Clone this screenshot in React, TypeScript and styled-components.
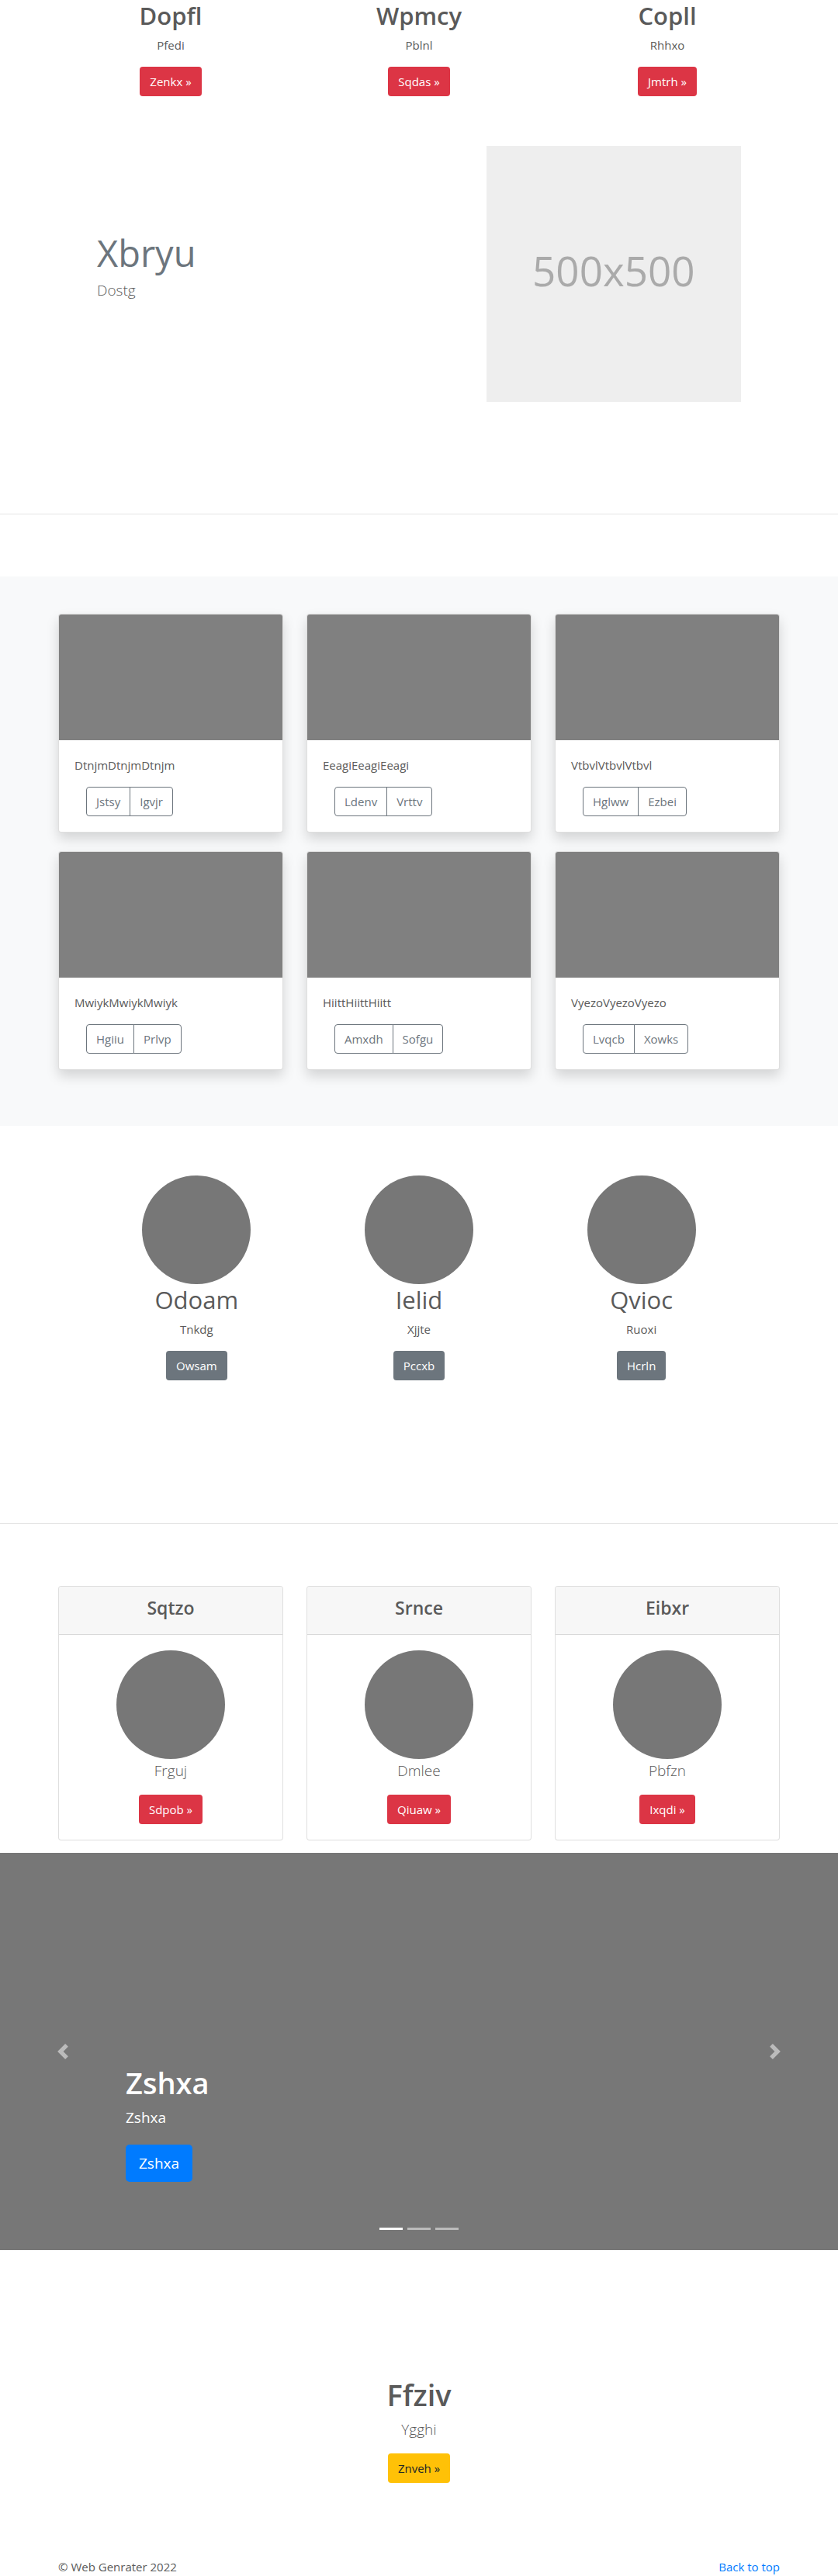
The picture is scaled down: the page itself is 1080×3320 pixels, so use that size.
import React from "react";
import styled, { createGlobalStyle, css } from "styled-components";

const GlobalStyle = createGlobalStyle`
  *, *::before, *::after { box-sizing: border-box; }
  body {
    margin: 0;
    background: #fff;
    color: #5a5a5a;
    font-family: "Segoe UI", "Open Sans", "Noto Sans", sans-serif;
    font-size: 15px;
    line-height: 24px;
  }
  h2, h4, p { margin: 0; }
  a { color: #007bff; text-decoration: none; }
`;

const Container = styled.div<{ $narrow?: boolean }>`
  width: 100%;
  max-width: ${(p) => (p.$narrow ? "860px" : "960px")};
  margin: 0 auto;
  padding: 0 15px;
`;

const Columns = styled.div<{ $rowGap?: number }>`
  display: grid;
  grid-template-columns: repeat(3, minmax(0, 1fr));
  column-gap: 30px;
  row-gap: ${(p) => p.$rowGap ?? 0}px;
  @media (max-width: 767px) {
    grid-template-columns: 1fr;
    row-gap: 24px;
  }
`;

const Centered = styled.div`
  display: flex;
  flex-direction: column;
  align-items: center;
  text-align: center;
`;

const Section = styled.section<{ $top?: number; $bottom?: number; $tint?: boolean }>`
  padding-top: ${(p) => p.$top ?? 0}px;
  padding-bottom: ${(p) => p.$bottom ?? 0}px;
  background: ${(p) => (p.$tint ? "#f8f9fa" : "transparent")};
`;

const Heading = styled.h2<{ $strong?: boolean }>`
  margin-bottom: 6px;
  font-size: 31px;
  line-height: 40px;
  font-weight: ${(p) => (p.$strong ? 600 : 400)};
`;

const Title = styled.h2`
  margin-bottom: 4px;
  font-size: 38px;
  line-height: 52px;
  font-weight: 600;
`;

const Text = styled.p`
  margin-bottom: 16px;
`;

const Lead = styled.p`
  margin-bottom: 16px;
  font-size: 19px;
  line-height: 30px;
  font-weight: 300;
`;

const tones = {
  danger: css`background: #dc3545; color: #fff;`,
  secondary: css`background: #6c757d; color: #fff;`,
  warning: css`background: #ffc107; color: #212529;`,
  primary: css`background: #007bff; color: #fff;`,
};

const ButtonLink = styled.a<{ $tone: keyof typeof tones; $large?: boolean }>`
  display: inline-block;
  padding: ${(p) => (p.$large ? "9px 17px" : "7px 13px")};
  border-radius: ${(p) => (p.$large ? "5px" : "4px")};
  font-size: ${(p) => (p.$large ? "19px" : "15px")};
  line-height: ${(p) => (p.$large ? "30px" : "24px")};
  ${(p) => tones[p.$tone]}
`;

const Divider = styled.hr`
  height: 1px;
  margin: 80px 0;
  border: 0;
  background: #e5e5e5;
`;

const Featurette = styled(Container)`
  display: grid;
  grid-template-columns: 7fr 5fr;
  align-items: center;
  padding: 0;
  @media (max-width: 767px) {
    grid-template-columns: 1fr;
  }
`;

const FeatureCell = styled.div`
  min-width: 0;
  padding: 0 15px;
`;

const FeatureHeading = styled.h2`
  margin-bottom: 8px;
  color: #6c757d;
  font-size: 47px;
  line-height: 50px;
  font-weight: 400;
`;

const Placeholder = styled.div`
  display: flex;
  align-items: center;
  justify-content: center;
  min-height: 330px;
  padding-bottom: 8px;
  background: #eee;
  color: #aaa;
  font-size: 53px;
  line-height: 64px;
`;

const Card = styled.article<{ $raised?: boolean }>`
  min-width: 0;
  overflow: hidden;
  border: 1px solid rgba(0, 0, 0, 0.125);
  border-radius: 4px;
  background: #fff;
  background-clip: border-box;
  box-shadow: ${(p) => (p.$raised ? "0 8px 16px rgba(0, 0, 0, 0.15)" : "none")};
`;

const CardImage = styled.div`
  height: 162px;
  background: #808080;
`;

const CardBody = styled.div`
  padding: 20px;
`;

const CenteredCardBody = styled(Centered)`
  padding: 20px;
`;

const CardHeader = styled.header`
  padding: 12px 20px 18px;
  border-bottom: 1px solid rgba(0, 0, 0, 0.125);
  background: #f7f7f7;
  text-align: center;
`;

const CardTitle = styled.h4`
  font-size: 23px;
  line-height: 31px;
  font-weight: 600;
`;

const ButtonGroup = styled.div`
  display: flex;
  padding: 0 15px;
`;

const OutlineButton = styled.button`
  padding: 6px 12px;
  border: 1px solid #6c757d;
  background: transparent;
  color: #6c757d;
  font: inherit;
  cursor: pointer;
  &:first-child {
    border-radius: 4px 0 0 4px;
  }
  &:last-child {
    margin-left: -1px;
    border-radius: 0 4px 4px 0;
  }
`;

const Circle = styled.div`
  width: 140px;
  height: 140px;
  border-radius: 50%;
  background: #777;
`;

const Carousel = styled.section`
  position: relative;
  height: 512px;
  margin-top: 16px;
  background: #777;
  color: #fff;
`;

const Caption = styled.div`
  position: absolute;
  right: 15%;
  bottom: 48px;
  left: 15%;
  padding: 20px 0 40px;
`;

const CaptionText = styled.p`
  margin-bottom: 20px;
  font-size: 19px;
  line-height: 30px;
`;

const Arrow = styled.button<{ $side: "left" | "right" }>`
  position: absolute;
  top: 0;
  bottom: 0;
  ${(p) => p.$side}: 0;
  display: flex;
  align-items: center;
  justify-content: center;
  width: 15%;
  padding: 0;
  border: 0;
  background: none;
  color: #fff;
  opacity: 0.5;
  cursor: pointer;
`;

const Indicators = styled.div`
  position: absolute;
  right: 15%;
  bottom: 16px;
  left: 15%;
  display: flex;
  justify-content: center;
  gap: 6px;
`;

const Indicator = styled.button<{ $active?: boolean }>`
  width: 30px;
  height: 23px;
  padding: 0;
  border: 0 solid transparent;
  border-width: 10px 0;
  background: #fff;
  background-clip: padding-box;
  opacity: ${(p) => (p.$active ? 1 : 0.5)};
  cursor: pointer;
`;

const Footer = styled.footer`
  padding-top: 96px;
`;

const FooterRow = styled(Container)`
  display: flex;
  justify-content: space-between;
`;

const intro = [
  ["Dopfl", "Pfedi", "Zenkx"],
  ["Wpmcy", "Pblnl", "Sqdas"],
  ["Copll", "Rhhxo", "Jmtrh"],
];

const album = [
  ["DtnjmDtnjmDtnjm", "Jstsy", "Igvjr"],
  ["EeagiEeagiEeagi", "Ldenv", "Vrttv"],
  ["VtbvlVtbvlVtbvl", "Hglww", "Ezbei"],
  ["MwiykMwiykMwiyk", "Hgiiu", "Prlvp"],
  ["HiittHiittHiitt", "Amxdh", "Sofgu"],
  ["VyezoVyezoVyezo", "Lvqcb", "Xowks"],
];

const people = [
  ["Odoam", "Tnkdg", "Owsam"],
  ["Ielid", "Xjjte", "Pccxb"],
  ["Qvioc", "Ruoxi", "Hcrln"],
];

const offers = [
  ["Sqtzo", "Frguj", "Sdpob"],
  ["Srnce", "Dmlee", "Qiuaw"],
  ["Eibxr", "Pbfzn", "Ixqdi"],
];

export default function App() {
  const [slide, setSlide] = React.useState(0);
  const step = (by: number) => setSlide((slide + by + 3) % 3);

  return (
    <>
      <GlobalStyle />
      <main>
        <Section $bottom={64}>
          <Container>
            <Columns>
              {intro.map(([title, text, action]) => (
                <Centered key={title}>
                  <Heading $strong>{title}</Heading>
                  <Text>{text}</Text>
                  <ButtonLink href="#" $tone="danger">{action} »</ButtonLink>
                </Centered>
              ))}
            </Columns>
          </Container>
        </Section>

        <Section $bottom={64}>
          <Featurette $narrow>
            <FeatureCell>
              <FeatureHeading>Xbryu</FeatureHeading>
              <Lead>Dostg</Lead>
            </FeatureCell>
            <FeatureCell>
              <Placeholder>500x500</Placeholder>
            </FeatureCell>
          </Featurette>
        </Section>

        <Divider />

        <Section $tint $top={48} $bottom={72}>
          <Container>
            <Columns $rowGap={24}>
              {album.map(([text, first, second]) => (
                <Card key={text} $raised>
                  <CardImage />
                  <CardBody>
                    <Text>{text}</Text>
                    <ButtonGroup>
                      <OutlineButton type="button">{first}</OutlineButton>
                      <OutlineButton type="button">{second}</OutlineButton>
                    </ButtonGroup>
                  </CardBody>
                </Card>
              ))}
            </Columns>
          </Container>
        </Section>

        <Section $top={64} $bottom={104}>
          <Container $narrow>
            <Columns>
              {people.map(([name, text, action]) => (
                <Centered key={name}>
                  <Circle />
                  <Heading>{name}</Heading>
                  <Text>{text}</Text>
                  <ButtonLink href="#" $tone="secondary">{action}</ButtonLink>
                </Centered>
              ))}
            </Columns>
          </Container>
        </Section>

        <Divider />

        <Container>
          <Columns>
            {offers.map(([title, text, action]) => (
              <Card key={title}>
                <CardHeader>
                  <CardTitle>{title}</CardTitle>
                </CardHeader>
                <CenteredCardBody>
                  <Circle />
                  <Lead>{text}</Lead>
                  <ButtonLink href="#" $tone="danger">{action} »</ButtonLink>
                </CenteredCardBody>
              </Card>
            ))}
          </Columns>
        </Container>

        <Carousel>
          <Caption>
            <Title>Zshxa</Title>
            <CaptionText>Zshxa</CaptionText>
            <ButtonLink href="#" $tone="primary" $large>Zshxa</ButtonLink>
          </Caption>
          <Arrow type="button" $side="left" aria-label="Previous" onClick={() => step(-1)}>
            <svg width="20" height="20" viewBox="0 0 8 8" fill="currentColor">
              <path d="M5.25 0l-4 4 4 4 1.5-1.5-2.5-2.5 2.5-2.5-1.5-1.5z" />
            </svg>
          </Arrow>
          <Arrow type="button" $side="right" aria-label="Next" onClick={() => step(1)}>
            <svg width="20" height="20" viewBox="0 0 8 8" fill="currentColor">
              <path d="M2.75 0l-1.5 1.5 2.5 2.5-2.5 2.5 1.5 1.5 4-4-4-4z" />
            </svg>
          </Arrow>
          <Indicators>
            {[0, 1, 2].map((i) => (
              <Indicator
                key={i}
                type="button"
                $active={i === slide}
                aria-label={`Slide ${i + 1}`}
                onClick={() => setSlide(i)}
              />
            ))}
          </Indicators>
        </Carousel>

        <Section $top={160}>
          <Centered>
            <Title>Ffziv</Title>
            <Lead>Ygghi</Lead>
            <ButtonLink href="#" $tone="warning">Znveh »</ButtonLink>
          </Centered>
        </Section>
      </main>

      <Footer>
        <FooterRow>
          <p>© Web Genrater 2022</p>
          <a href="#">Back to top</a>
        </FooterRow>
      </Footer>
    </>
  );
}
